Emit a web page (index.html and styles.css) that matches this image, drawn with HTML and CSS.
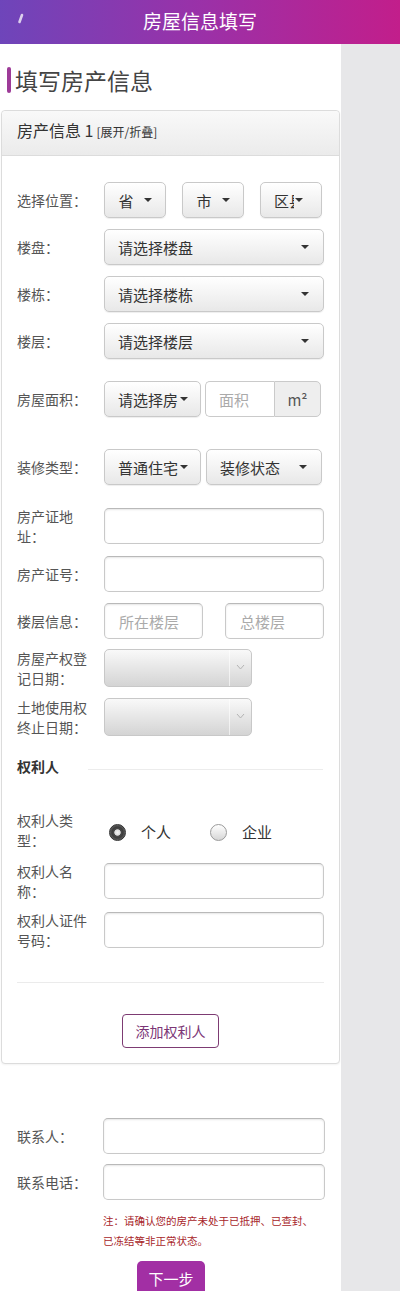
FILE: index.html
```html
<!DOCTYPE html>
<html lang="zh-CN">
<head>
<meta charset="utf-8">
<title>房屋信息填写</title>
<link rel="stylesheet" href="styles.css">
</head>
<body>
<header class="topbar">
  <svg class="back" width="12" height="14" viewBox="0 0 12 14"><path d="M7 3 L4.5 10" stroke="#fff" stroke-opacity="0.75" stroke-width="2.6" stroke-linecap="round" fill="none"/></svg>
  <h1 class="topbar-title">房屋信息填写</h1>
  <span></span>
</header>
<main class="page">
  <h2 class="page-title">填写房产信息</h2>
  <section class="card">
    <div class="card-head"><span class="card-title">房产信息 1</span><span class="card-toggle">[展开/折叠]</span></div>
    <div class="card-body">
      <div class="row row-first">
        <div class="lbl">选择位置：</div>
        <div class="ctrl ctrl-three">
          <div class="sel sel-short"><span>省</span><i class="caret"></i></div>
          <div class="sel sel-short"><span>市</span><i class="caret"></i></div>
          <div class="sel sel-short sel-left"><span class="clip clip-2">区县</span><i class="caret caret-tight"></i></div>
        </div>
      </div>
      <div class="row">
        <div class="lbl">楼盘：</div>
        <div class="sel sel-full"><span>请选择楼盘</span><i class="caret"></i></div>
      </div>
      <div class="row">
        <div class="lbl">楼栋：</div>
        <div class="sel sel-full"><span>请选择楼栋</span><i class="caret"></i></div>
      </div>
      <div class="row">
        <div class="lbl">楼层：</div>
        <div class="sel sel-full"><span>请选择楼层</span><i class="caret"></i></div>
      </div>
      <div class="row row-gap22">
        <div class="lbl">房屋面积：</div>
        <div class="ctrl">
          <div class="sel sel-clip"><span class="clip clip-4">请选择房</span><i class="caret caret-tight"></i></div>
          <div class="igroup">
            <div class="igroup-input">面积</div>
            <div class="addon">m²</div>
          </div>
        </div>
      </div>
      <div class="row row-gap32">
        <div class="lbl">装修类型：</div>
        <div class="ctrl">
          <div class="sel sel-clip"><span class="clip clip-4">普通住宅</span><i class="caret caret-tight"></i></div>
          <div class="sel sel-mid"><span>装修状态</span><i class="caret"></i></div>
        </div>
      </div>
      <div class="row row-gap23">
        <div class="lbl">房产证地址：</div>
        <div class="inp"></div>
      </div>
      <div class="row row-gap12">
        <div class="lbl">房产证号：</div>
        <div class="inp"></div>
      </div>
      <div class="row">
        <div class="lbl">楼层信息：</div>
        <div class="ctrl ctrl-two">
          <div class="inp inp-half">所在楼层</div>
          <div class="inp inp-half">总楼层</div>
        </div>
      </div>
      <div class="row row-gap10">
        <div class="lbl">房屋产权登记日期：</div>
        <div class="date"><span class="date-arrow"><svg width="9" height="6" viewBox="0 0 9 6"><path d="M1 1 L4.5 5 L8 1" stroke="#b4b4b4" stroke-width="1" fill="none"/></svg></span></div>
      </div>
      <div class="row">
        <div class="lbl">土地使用权终止日期：</div>
        <div class="date"><span class="date-arrow"><svg width="9" height="6" viewBox="0 0 9 6"><path d="M1 1 L4.5 5 L8 1" stroke="#b4b4b4" stroke-width="1" fill="none"/></svg></span></div>
      </div>
      <div class="sub">
        <div class="sub-title">权利人</div>
        <div class="sub-line"></div>
      </div>
      <div class="row row-gap38">
        <div class="lbl">权利人类型：</div>
        <div class="ctrl radios">
          <span class="radio radio-on"></span><span class="radio-text">个人</span>
          <span class="radio radio-off"></span><span class="radio-text">企业</span>
        </div>
      </div>
      <div class="row row-gap17">
        <div class="lbl">权利人名称：</div>
        <div class="inp"></div>
      </div>
      <div class="row row-gap13">
        <div class="lbl">权利人证件号码：</div>
        <div class="inp"></div>
      </div>
      <div class="divider"></div>
      <div class="add-btn">添加权利人</div>
    </div>
  </section>
  <section class="contact">
    <div class="row row-first">
      <div class="lbl lbl-contact">联系人：</div>
      <div class="inp inp-wide"></div>
    </div>
    <div class="row row-gap10">
      <div class="lbl lbl-contact">联系电话：</div>
      <div class="inp inp-wide"></div>
    </div>
    <p class="note">注：请确认您的房产未处于已抵押、已查封、已冻结等非正常状态。</p>
    <div class="next-btn">下一步</div>
  </section>
</main>
</body>
</html>
```
FILE: styles.css
```css
* { box-sizing: border-box; margin: 0; padding: 0; }
html, body { height: 100%; }
body {
  background: #e7e7e9;
  font-family: "Noto Sans CJK SC", "Noto Sans", sans-serif;
  color: #333;
}
.topbar {
  height: 44px;
  display: grid;
  grid-template-columns: 1fr auto 1fr;
  align-items: center;
  background: linear-gradient(90deg, #6e45ba 0%, #9a31a8 50%, #c21e8b 100%);
}
.back { margin-left: 15px; margin-top: -6px; }
.topbar-title {
  font-size: 19px;
  line-height: 24px;
  font-weight: 400;
  color: #fff;
  margin-top: -2px;
}
.page {
  width: 341px;
  min-height: calc(100% - 44px);
  background: #fff;
  padding-top: 22px;
  padding-bottom: 10px;
}
.page-title {
  display: flex;
  align-items: center;
  gap: 4px;
  padding-left: 7px;
  height: 28px;
  font-size: 23px;
  line-height: 28px;
  font-weight: 400;
  color: #444;
}
.page-title::before {
  content: "";
  width: 4px;
  height: 26px;
  border-radius: 2px;
  background: #9d3b98;
}
.card {
  margin: 16px 1px 0;
  border: 1px solid #dcdcdc;
  border-radius: 4px;
  background: #fff;
  box-shadow: 0 1px 2px rgba(0,0,0,0.05);
}
.card-head {
  height: 45px;
  padding-left: 15px;
  line-height: 38px;
  background: linear-gradient(#f9f9f9, #ebebeb);
  border-bottom: 1px solid #dcdcdc;
  border-radius: 4px 4px 0 0;
}
.card-title { font-size: 16px; color: #333; }
.card-toggle { font-size: 12px; color: #333; margin-left: 3px; }
.card-body { padding: 0 15px 15px; }
.row { display: flex; align-items: center; margin-top: 11px; }
.row-first { margin-top: 26px; }
.row-gap10 { margin-top: 10px; }
.row-gap12 { margin-top: 12px; }
.row-gap13 { margin-top: 13px; }
.row-gap17 { margin-top: 17px; }
.row-gap22 { margin-top: 22px; }
.row-gap23 { margin-top: 23px; }
.row-gap32 { margin-top: 32px; }
.row-gap38 { margin-top: 38px; }
.lbl {
  width: 87px;
  flex-shrink: 0;
  margin: -4px 0;
  padding-right: 15px;
  font-size: 14px;
  line-height: 20px;
  color: #555;
}
.lbl-contact { width: 86px; }
.ctrl { display: flex; align-items: center; }
.ctrl-three { gap: 16px; }
.ctrl-two { gap: 22px; }
.sel {
  height: 36px;
  display: flex;
  align-items: center;
  border: 1px solid #c9c9c9;
  border-radius: 5px;
  background: linear-gradient(#ffffff, #e8e8e8);
  box-shadow: 0 1px 1px rgba(0,0,0,0.07);
  font-size: 15px;
  color: #333;
  white-space: nowrap;
}
.sel-short { width: 62px; justify-content: center; gap: 10px; }
.sel-left { justify-content: flex-start; padding-left: 13px; gap: 0; }
.sel-full { width: 220px; justify-content: space-between; padding: 0 14px 0 13px; }
.sel-clip { width: 97px; padding-left: 13px; }
.sel-mid { width: 116px; margin-left: 5px; justify-content: space-between; padding: 0 14px 0 13px; }
.clip { display: block; overflow: hidden; white-space: nowrap; }
.clip-2 { width: 20px; }
.clip-4 { width: 61px; }
.caret {
  width: 0;
  height: 0;
  border-left: 4px solid transparent;
  border-right: 4px solid transparent;
  border-top: 4px solid #333;
}
.caret-tight { margin-left: 1px; }
.igroup { display: flex; height: 36px; margin-left: 4px; }
.igroup-input {
  width: 69px;
  display: flex;
  align-items: center;
  padding-left: 13px;
  border: 1px solid #cacaca;
  border-right: none;
  border-radius: 5px 0 0 5px;
  font-size: 15px;
  color: #aaa;
  background: #fff;
}
.addon {
  width: 47px;
  display: flex;
  align-items: center;
  justify-content: center;
  border: 1px solid #cacaca;
  border-radius: 0 5px 5px 0;
  background: #eeeeee;
  font-size: 15px;
  color: #555;
}
.inp {
  width: 220px;
  height: 36px;
  display: flex;
  align-items: center;
  padding-left: 14px;
  border: 1px solid #c9c9c9;
  border-top-color: #b9b9b9;
  border-radius: 5px;
  background: #fff;
  box-shadow: inset 0 1px 2px rgba(0,0,0,0.1);
  font-size: 15px;
  color: #aaa;
}
.inp-half { width: 99px; }
.inp-wide { width: 222px; }
.date {
  width: 148px;
  height: 38px;
  display: flex;
  justify-content: flex-end;
  border: 1px solid #c8c8c8;
  border-radius: 5px;
  background: linear-gradient(#f9f9f9, #d4d4d4);
}
.date-arrow {
  width: 22px;
  display: flex;
  align-items: center;
  justify-content: center;
  border-left: 1px solid rgba(255,255,255,0.6);
  padding-bottom: 2px;
}
.sub { display: flex; align-items: center; margin-top: 20px; height: 20px; }
.sub-title { width: 71px; flex-shrink: 0; font-size: 14px; font-weight: 700; color: #333; }
.sub-line { flex: 1; height: 1px; background: #ececec; margin-top: 6px; margin-right: 1px; }
.radios { padding-left: 5px; padding-top: 4px; }
.radio { width: 17px; height: 17px; border-radius: 50%; flex-shrink: 0; }
.radio-on {
  border: 1px solid #2f2f2f;
  background: radial-gradient(circle, #f2f2f2 0, #dcdcdc 2.8px, #4a4a4a 3.6px, #3c3c3c 5.5px, #6a6a6a 8px);
}
.radio-off {
  border: 1px solid #9a9a9a;
  background: linear-gradient(#ffffff, #d6d6d6);
  margin-left: 39px;
}
.radio-text { font-size: 15px; color: #333; margin-left: 15px; line-height: 20px; }
.divider { height: 1px; background: #ebebeb; margin-top: 34px; }
.add-btn {
  width: 97px;
  height: 34px;
  margin: 31px auto 0;
  display: flex;
  align-items: center;
  justify-content: center;
  border: 1px solid #7d3b73;
  border-radius: 4px;
  font-size: 14px;
  color: #7b3576;
}
.contact { padding: 54px 0 0 17px; }
.contact .row-first { margin-top: 0; }
.note {
  width: 212px;
  margin: 11px 0 0 86px;
  font-size: 10.5px;
  line-height: 20px;
  color: #a8262a;
}
.next-btn {
  width: 68px;
  height: 34px;
  margin: 10px 0 0 120px;
  display: flex;
  align-items: center;
  justify-content: center;
  border-radius: 5px;
  background: #a22fa4;
  font-size: 15px;
  color: #fff;
}
```
